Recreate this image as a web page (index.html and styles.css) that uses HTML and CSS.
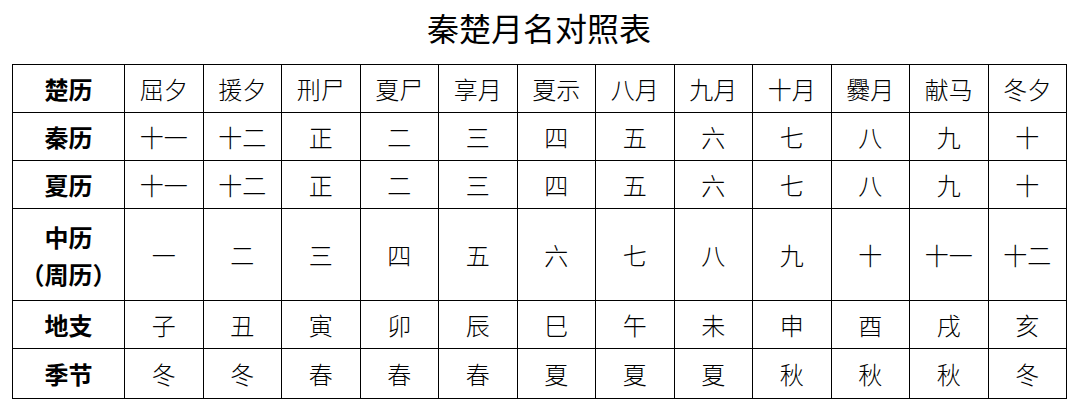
FILE: index.html
```html
<!DOCTYPE html>
<html lang="zh-CN">
<head>
<meta charset="utf-8">
<title>秦楚月名对照表</title>
<link rel="stylesheet" href="styles.css">
</head>
<body>
<main class="page">
  <h1 class="title">秦楚月名对照表</h1>
  <table class="grid">
    <colgroup>
      <col class="col-head">
      <col span="12" class="col-month">
    </colgroup>
    <tbody>
      <tr class="row">
        <th>楚历</th><td>屈夕</td><td>援夕</td><td>刑尸</td><td>夏尸</td><td>享月</td><td>夏示</td><td>八月</td><td>九月</td><td>十月</td><td>爨月</td><td>献马</td><td>冬夕</td>
      </tr>
      <tr class="row">
        <th>秦历</th><td>十一</td><td>十二</td><td>正</td><td>二</td><td>三</td><td>四</td><td>五</td><td>六</td><td>七</td><td>八</td><td>九</td><td>十</td>
      </tr>
      <tr class="row">
        <th>夏历</th><td>十一</td><td>十二</td><td>正</td><td>二</td><td>三</td><td>四</td><td>五</td><td>六</td><td>七</td><td>八</td><td>九</td><td>十</td>
      </tr>
      <tr class="row row-tall">
        <th>中历<br>（周历）</th><td>一</td><td>二</td><td>三</td><td>四</td><td>五</td><td>六</td><td>七</td><td>八</td><td>九</td><td>十</td><td>十一</td><td>十二</td>
      </tr>
      <tr class="row row-mid">
        <th>地支</th><td>子</td><td>丑</td><td>寅</td><td>卯</td><td>辰</td><td>巳</td><td>午</td><td>未</td><td>申</td><td>酉</td><td>戌</td><td>亥</td>
      </tr>
      <tr class="row row-last">
        <th>季节</th><td>冬</td><td>冬</td><td>春</td><td>春</td><td>春</td><td>夏</td><td>夏</td><td>夏</td><td>秋</td><td>秋</td><td>秋</td><td>冬</td>
      </tr>
    </tbody>
  </table>
</main>
</body>
</html>
```

FILE: styles.css
```css
html, body {
  margin: 0;
  padding: 0;
  background: #ffffff;
}

.page {
  display: flex;
  flex-direction: column;
  align-items: flex-start;
  padding: 7px 12px 0 12px;
  font-family: "Noto Sans CJK SC", "Noto Sans", sans-serif;
  color: #000000;
}

.title {
  align-self: stretch;
  margin: 0 0 17px 0;
  font-size: 32px;
  font-weight: 400;
  line-height: 40px;
  text-align: center;
  width: 1054px;
}

.grid {
  border-collapse: collapse;
  table-layout: fixed;
  width: 1055px;
}

.col-head {
  width: 112px;
}

.col-month {
  width: 78.5px;
}

.grid th,
.grid td {
  border: 1px solid #000000;
  padding: 0;
  text-align: center;
  vertical-align: middle;
  font-size: 24px;
  line-height: 37px;
}

.grid th {
  font-weight: 700;
}

.grid td {
  font-weight: 300;
}

.row {
  height: 48px;
}

.row-tall {
  height: 92px;
}

.row-mid {
  height: 47.5px;
}

.row-last {
  height: 50px;
}
```
